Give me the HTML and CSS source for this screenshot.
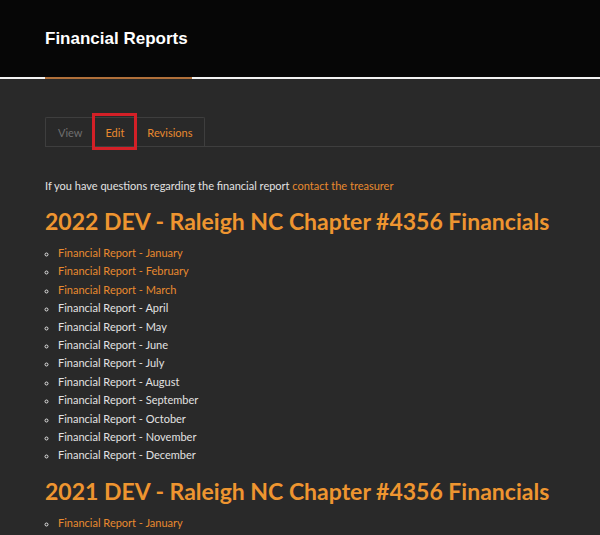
FILE: index.html
```html
<!DOCTYPE html>
<html>
<head>
<meta charset="utf-8">
<link rel="stylesheet" href="styles.css">
</head>
<body>
<header class="site-header">
  <h1 class="page-title">Financial Reports</h1>
</header>
<main class="content">
  <nav class="tabs">
    <span class="tab tab-view">View</span>
    <a class="tab tab-edit">Edit</a>
    <a class="tab">Revisions</a>
  </nav>
  <p class="intro">If you have questions regarding the financial report <a class="link">contact the treasurer</a></p>
  <h2 class="year-title">2022 DEV - Raleigh NC Chapter #4356 Financials</h2>
  <ul class="reports">
    <li><a class="link">Financial Report - January</a></li>
    <li><a class="link">Financial Report - February</a></li>
    <li><a class="link">Financial Report - March</a></li>
    <li>Financial Report - April</li>
    <li>Financial Report - May</li>
    <li>Financial Report - June</li>
    <li>Financial Report - July</li>
    <li>Financial Report - August</li>
    <li>Financial Report - September</li>
    <li>Financial Report - October</li>
    <li>Financial Report - November</li>
    <li>Financial Report - December</li>
  </ul>
  <h2 class="year-title">2021 DEV - Raleigh NC Chapter #4356 Financials</h2>
  <ul class="reports">
    <li><a class="link">Financial Report - January</a></li>
  </ul>
</main>
</body>
</html>
```
FILE: styles.css
```css
html, body {
  margin: 0;
  padding: 0;
  background: #292929;
  height: 100%;
  overflow: hidden;
}
body {
  font-family: Lato, "Open Sans", sans-serif;
  color: #e2e2e2;
}
.site-header {
  background: #060606;
  height: 77px;
  border-bottom: 2px solid #f2f2f2;
  padding: 0 45px;
  display: flex;
  align-items: flex-end;
}
.page-title {
  margin: 0 0 -2px 0;
  font-family: "Liberation Sans", Arial, sans-serif;
  font-size: 17px;
  font-weight: bold;
  color: #ffffff;
  padding: 0 2px 28px 0;
  width: 145px;
  border-bottom: 2px solid #b0703a;
}
.content {
  padding: 38px 0 0 45px;
}
.tabs {
  display: flex;
  border-bottom: 1px solid #3e3e3e;
  height: 29px;
}
.tab {
  font-size: 11px;
  color: #e8892f;
  padding: 0 11px;
  display: flex;
  align-items: center;
  border-top: 1px solid #3e3e3e;
}
.tab:first-child {
  border-left: 1px solid #3e3e3e;
  border-radius: 2px 0 0 0;
  padding-left: 12px;
}
.tab:last-child {
  border-right: 1px solid #3e3e3e;
  border-radius: 0 2px 0 0;
  padding-right: 12px;
}
.tab-view {
  color: #6f6f6f;
}
.tab-edit {
  position: relative;
  padding: 0 12px;
}
.tab-edit::after {
  content: "";
  position: absolute;
  top: -5px;
  bottom: -4px;
  left: -1px;
  right: -1px;
  border: 3px solid #d42027;
}
.intro {
  font-size: 11px;
  margin: 32px 0 0 0;
}
.link {
  color: #e8892f;
  text-decoration: none;
}
.year-title {
  font-size: 23px;
  font-weight: bold;
  color: #ee9530;
  margin: 15px 0 9px 0;
}
.reports + .year-title {
  margin-top: 12px;
}
.reports {
  list-style: circle;
  margin: 0;
  padding-left: 13px;
  font-size: 11px;
}
.reports li {
  line-height: 18.4px;
}
.reports li::marker {
  font-size: 10px;
}
```
